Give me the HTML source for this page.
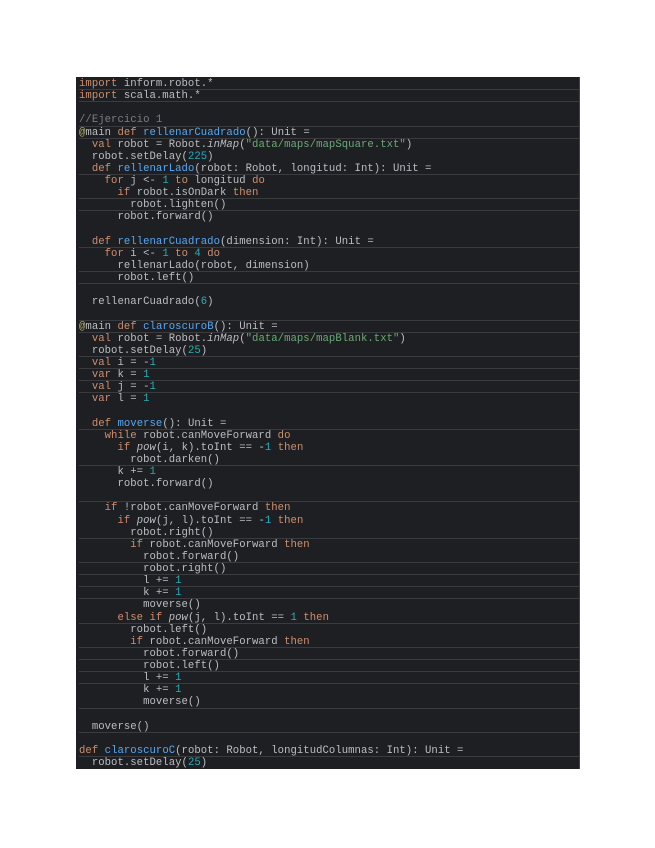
<!DOCTYPE html>
<html><head><style>
body{margin:0;background:#fff;width:655px;height:848px;position:relative}
pre{position:absolute;left:76px;top:77px;width:504px;height:692px;margin:0;background:#1e1f22;color:#bcbec4;font-family:"Liberation Mono",monospace;font-size:10.6px;line-height:12.125px;padding:1px 0 0 3px;box-sizing:border-box;white-space:pre;overflow:hidden;border-right:1px solid #444;letter-spacing:0.05px}
.k{color:#cf8e6d}.f{color:#56a8f5}.s{color:#6aab73}.n{color:#2aacb8}.c{color:#7a7e85}.a{color:#b3ae60}.i{font-style:italic}
.l{display:block;border-bottom:1px solid #3a3b3f;height:11.125px}
</style></head><body><pre><span class="l"><span class="k">import</span> inform.robot.*</span><span class="l"><span class="k">import</span> scala.math.*</span>
<span class="l"><span class="c">//Ejercicio 1</span></span><span class="l"><span class="a">@</span>main <span class="k">def</span> <span class="f">rellenarCuadrado</span>(): Unit =</span>  <span class="k">val</span> robot = Robot.<span class="i">inMap</span>(<span class="s">"data/maps/mapSquare.txt"</span>)
  robot.setDelay(<span class="n">225</span>)
<span class="l">  <span class="k">def</span> <span class="f">rellenarLado</span>(robot: Robot, longitud: Int): Unit =</span>    <span class="k">for</span> j &lt;- <span class="n">1</span> <span class="k">to</span> longitud <span class="k">do</span>
<span class="l">      <span class="k">if</span> robot.isOnDark <span class="k">then</span></span><span class="l">        robot.lighten()</span>      robot.forward()

<span class="l">  <span class="k">def</span> <span class="f">rellenarCuadrado</span>(dimension: Int): Unit =</span>    <span class="k">for</span> i &lt;- <span class="n">1</span> <span class="k">to</span> <span class="n">4</span> <span class="k">do</span>
<span class="l">      rellenarLado(robot, dimension)</span><span class="l">      robot.left()</span>
  rellenarCuadrado(<span class="n">6</span>)
<span class="l"></span><span class="l"><span class="a">@</span>main <span class="k">def</span> <span class="f">claroscuroB</span>(): Unit =</span>  <span class="k">val</span> robot = Robot.<span class="i">inMap</span>(<span class="s">"data/maps/mapBlank.txt"</span>)
<span class="l">  robot.setDelay(<span class="n">25</span>)</span><span class="l">  <span class="k">val</span> i = -<span class="n">1</span></span><span class="l">  <span class="k">var</span> k = <span class="n">1</span></span><span class="l">  <span class="k">val</span> j = -<span class="n">1</span></span>  <span class="k">var</span> l = <span class="n">1</span>

<span class="l">  <span class="k">def</span> <span class="f">moverse</span>(): Unit =</span>    <span class="k">while</span> robot.canMoveForward <span class="k">do</span>
      <span class="k">if</span> <span class="i">pow</span>(i, k).toInt == -<span class="n">1</span> <span class="k">then</span>
<span class="l">        robot.darken()</span>      k += <span class="n">1</span>
      robot.forward()
<span class="l"></span>    <span class="k">if</span> !robot.canMoveForward <span class="k">then</span>
      <span class="k">if</span> <span class="i">pow</span>(j, l).toInt == -<span class="n">1</span> <span class="k">then</span>
<span class="l">        robot.right()</span>        <span class="k">if</span> robot.canMoveForward <span class="k">then</span>
<span class="l">          robot.forward()</span><span class="l">          robot.right()</span><span class="l">          l += <span class="n">1</span></span><span class="l">          k += <span class="n">1</span></span>          moverse()
<span class="l">      <span class="k">else if</span> <span class="i">pow</span>(j, l).toInt == <span class="n">1</span> <span class="k">then</span></span>        robot.left()
<span class="l">        <span class="k">if</span> robot.canMoveForward <span class="k">then</span></span><span class="l">          robot.forward()</span><span class="l">          robot.left()</span><span class="l">          l += <span class="n">1</span></span>          k += <span class="n">1</span>
<span class="l">          moverse()</span>
<span class="l">  moverse()</span>
<span class="l"><span class="k">def</span> <span class="f">claroscuroC</span>(robot: Robot, longitudColumnas: Int): Unit =</span>  robot.setDelay(<span class="n">25</span>)</pre></body></html>
